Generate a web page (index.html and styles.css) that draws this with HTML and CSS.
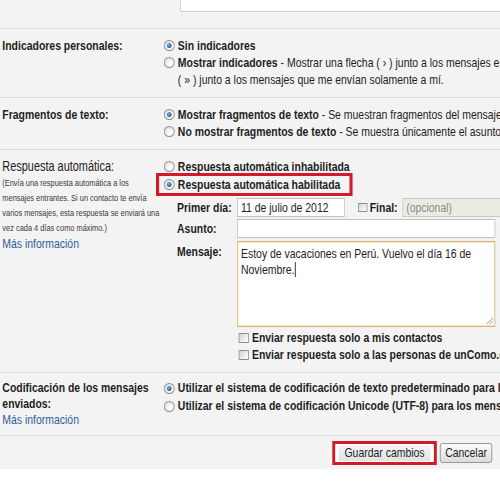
FILE: index.html
```html
<!DOCTYPE html>
<html lang="es">
<head>
<meta charset="utf-8">
<title>Configuración</title>
<link rel="stylesheet" href="styles.css">
</head>
<body>
<div class="page">
  <div class="top"><div class="top-input"></div></div>

  <div class="row r1">
    <div class="label b">Indicadores personales:</div>
    <div class="opts">
      <div class="opt"><span class="radio on"></span><span class="b">Sin indicadores</span></div>
      <div class="opt"><span class="radio"></span><span><span class="b">Mostrar indicadores</span> - Mostrar una flecha ( › ) junto a los mensajes enviados a mi dirección (no a una lista de distribución) y una flecha doble</span></div>
      <div class="opt-cont">( » ) junto a los mensajes que me envían solamente a mí.</div>
    </div>
  </div>

  <div class="row r2">
    <div class="label b">Fragmentos de texto:</div>
    <div class="opts">
      <div class="opt"><span class="radio on"></span><span><span class="b">Mostrar fragmentos de texto</span> - Se muestran fragmentos del mensaje (como en la Búsqueda web de Google)</span></div>
      <div class="opt"><span class="radio"></span><span><span class="b">No mostrar fragmentos de texto</span> - Se muestra únicamente el asunto.</span></div>
    </div>
  </div>

  <div class="row r3">
    <div class="label">
      <div class="label-title">Respuesta automática:</div>
      <div class="note">(Envía una respuesta automática a los<br>mensajes entrantes. Si un contacto te envía<br>varios mensajes, esta respuesta se enviará una<br>vez cada 4 días como máximo.)</div>
      <a class="link" href="#">Más información</a>
    </div>
    <div class="opts">
      <div class="opt"><span class="radio"></span><span class="b">Respuesta automática inhabilitada</span></div>
      <div class="hl-opt"><span class="radio on"></span><span class="b">Respuesta automática habilitada</span></div>
      <div class="form">
        <div class="frow">
          <div class="flabel b">Primer día:</div>
          <div class="input date">11 de julio de 2012</div>
          <span class="check small"></span>
          <span class="b final">Final:</span>
          <div class="input disabled">(opcional)</div>
        </div>
        <div class="frow subject-row">
          <div class="flabel b">Asunto:</div>
          <div class="input subject"></div>
        </div>
        <div class="frow msg-row">
          <div class="flabel b msg-label">Mensaje:</div>
          <div class="textarea">Estoy de vacaciones en Perú. Vuelvo el día 16 de<br>Noviembre.<span class="caret"></span><svg class="grip" width="12" height="9" viewBox="0 0 12 9" preserveAspectRatio="none"><path d="M11 2L3 8M11 5L7 8" stroke="#8a8a8a" stroke-width="1" fill="none"/></svg></div>
        </div>
        <div class="checks">
          <div class="copt"><span class="check"></span><span class="b">Enviar respuesta solo a mis contactos</span></div>
          <div class="copt"><span class="check"></span><span class="b">Enviar respuesta solo a las personas de unComo.com</span></div>
        </div>
      </div>
    </div>
  </div>

  <div class="row r4">
    <div class="label label16">
      <div class="b">Codificación de los mensajes<br>enviados:</div>
      <a class="link" href="#">Más información</a>
    </div>
    <div class="opts opts18">
      <div class="opt"><span class="radio on"></span><span class="b">Utilizar el sistema de codificación de texto predeterminado para los mensajes salientes</span></div>
      <div class="opt"><span class="radio"></span><span class="b">Utilizar el sistema de codificación Unicode (UTF-8) para los mensajes salientes</span></div>
    </div>
  </div>

  <div class="buttons">
    <span class="hl-btn"><button class="btn save">Guardar cambios</button></span>
    <button class="btn cancel">Cancelar</button>
  </div>
</div>
</body>
</html>
```

FILE: styles.css
```css
html, body {
  margin: 0;
  padding: 0;
  background: #ffffff;
  width: 500px;
  height: 500px;
  overflow: hidden;
}

body {
  font-family: "Liberation Sans", Arial, sans-serif;
  font-size: 13.4px;
  color: #1e1e1e;
}

/* the reference is a horizontally condensed capture */
.page {
  width: 641px;
  background: #f3f3f3;
  overflow: hidden;
  transform: scaleX(0.78);
  transform-origin: 0 0;
}

.b { font-weight: bold; }

.top {
  height: 28px;
}

.top-input {
  margin-left: 231px;
  width: 420px;
  height: 11px;
  background: #ffffff;
  border: 1px solid #cccccc;
  border-top: 0;
}

.row {
  display: grid;
  grid-template-columns: 209px 1fr;
  border-top: 1px solid #dcdcdc;
  white-space: nowrap;
}

.label {
  padding: 8px 0 0 3px;
  line-height: 17px;
}

.opts {
  padding: 8px 0 9px 0;
  line-height: 17px;
  min-width: 0;
}

.opt, .hl-opt, .copt {
  display: flex;
  align-items: center;
  height: 17px;
}

.opt-cont {
  padding-left: 19px;
  height: 17px;
}

.radio {
  flex: none;
  width: 14px;
  height: 11px;
  box-sizing: border-box;
  margin: 0 4px 0 1px;
  border-radius: 50%;
  border: 1px solid #8d8d8d;
  background: radial-gradient(ellipse at 60% 65%, #ffffff 0%, #f2f2f2 40%, #cdcdcd 100%);
  position: relative;
}

.radio.on::after {
  content: "";
  position: absolute;
  left: 3px;
  top: 2px;
  width: 6px;
  height: 5px;
  border-radius: 50%;
  background: radial-gradient(ellipse at 40% 40%, #86b6ec 0%, #2a64b0 55%, #123f7a 100%);
}

.hl-opt {
  border-style: solid;
  border-color: #d11a2a;
  border-width: 3px 4px;
  margin: -2px 0 0 -9px;
  padding: 0 12px 0 5px;
  width: max-content;
}

.label-title {
  height: 17px;
  font-size: 14px;
}

.note {
  font-size: 9.5px;
  line-height: 15px;
  color: #3a3a3a;
}

.link {
  display: block;
  color: #2f5d9c;
  text-decoration: none;
}

.form {
  margin-left: 18px;
  display: flex;
  flex-direction: column;
}

.frow {
  display: flex;
  align-items: center;
  margin-top: 2px;
}

.subject-row { margin-top: 2px; }

.msg-row {
  margin-top: 3px;
  align-items: flex-start;
}

.flabel {
  width: 77px;
  flex: none;
  height: 17px;
  line-height: 17px;
}

.input {
  box-sizing: border-box;
  height: 19px;
  background: #ffffff;
  border: 1px solid #c0c0c0;
  line-height: 17px;
  padding: 0 4px;
  flex: none;
}

.input.date {
  width: 138px;
}

.check {
  flex: none;
  box-sizing: border-box;
  width: 13px;
  height: 10px;
  border: 1px solid #8e8e8e;
  background: linear-gradient(135deg, #d2d2d2 0%, #f2f2f2 70%, #ffffff 100%);
  margin: 0 4px 0 2px;
}

.check.small {
  width: 12px;
  height: 9px;
  margin: 0 3px 0 17px;
}

.final {
  margin-right: 6px;
}

.input.disabled {
  width: 150px;
  background: #ebebe4;
  color: #8a8a8a;
  border-color: #c9c9c4;
}

.input.subject {
  width: 331px;
}

.msg-label {
  margin-top: 2px;
}

.textarea {
  box-sizing: border-box;
  width: 331px;
  height: 86px;
  background: #ffffff;
  border: 1px solid #d4b46e;
  box-shadow: inset 0 0 0 1px #f6eacb;
  padding: 4px 4px;
  line-height: 16px;
  position: relative;
  white-space: nowrap;
}

.caret {
  display: inline-block;
  width: 1px;
  height: 15px;
  background: #000000;
  vertical-align: -3px;
  margin-left: 1px;
}

.grip {
  position: absolute;
  right: 1px;
  bottom: 1px;
}

.checks {
  margin: 2px 0 0 77px;
}

.r4 .label16 {
  padding-top: 7px;
  line-height: 16px;
  padding-bottom: 7px;
}

.opts18 {
  padding-top: 6px;
  line-height: 18px;
}

.opts18 .opt {
  height: 18px;
}

.buttons {
  border-top: 1px solid #dcdcdc;
  display: flex;
  justify-content: flex-end;
  align-items: center;
  padding: 5px 10px 4px 0;
  gap: 4px;
}

.btn {
  font-family: inherit;
  font-size: 13.4px;
  color: #1e1e1e;
  margin: 0;
  box-sizing: border-box;
  cursor: pointer;
  white-space: nowrap;
}

.hl-btn {
  display: inline-flex;
  border-style: solid;
  border-color: #d11a2a;
  border-width: 3px 4px;
}

.btn.save {
  width: 126px;
  height: 18px;
  padding: 0;
  line-height: 16px;
  background: linear-gradient(#f4f4f4, #e3e3e3);
  border: 1px solid #ffffff;
  border-left-width: 4px;
  border-right-width: 4px;
}

.btn.cancel {
  width: 67px;
  height: 20px;
  padding: 0;
  line-height: 18px;
  border: 1px solid #8c8c8c;
  border-radius: 3px;
  background: linear-gradient(#fbfbfb, #dcdcdc);
}
```
